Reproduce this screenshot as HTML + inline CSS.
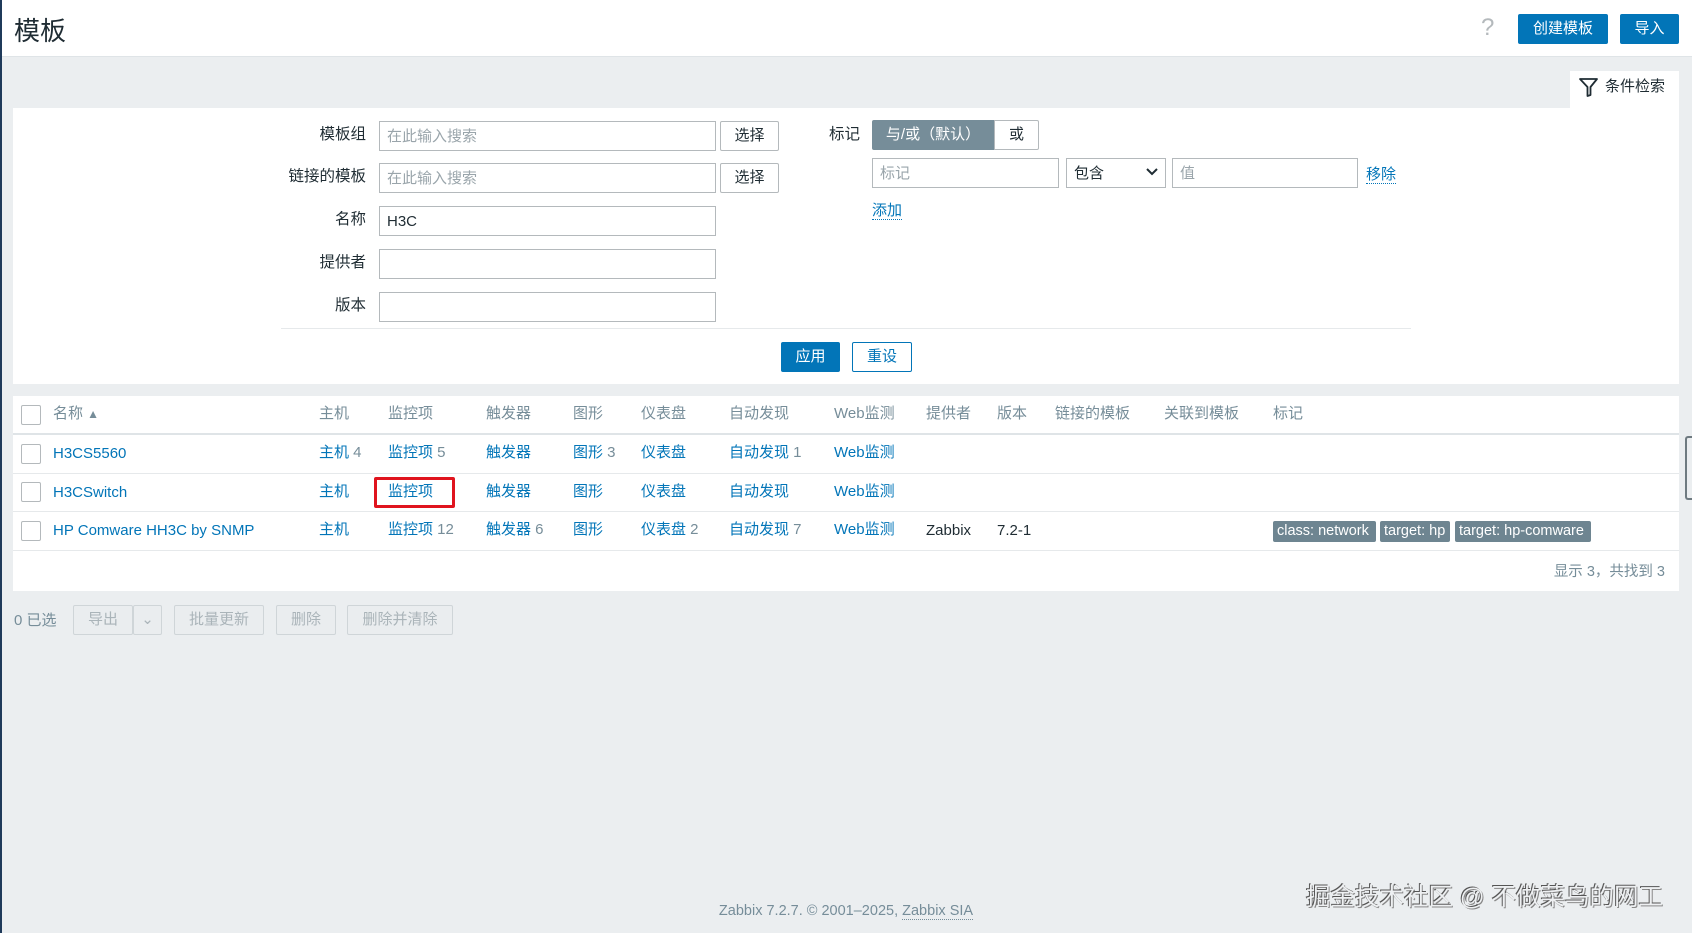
<!DOCTYPE html>
<html><head><meta charset="utf-8"><style>
*{box-sizing:border-box;margin:0;padding:0}
body{width:1692px;height:933px;background:#ebeef0;font-family:"Liberation Sans","Noto Sans CJK SC",sans-serif;font-size:15px;color:#1f2c33;position:relative;overflow:hidden}
.a{position:absolute}
.hdr{left:0;top:0;width:1692px;height:57px;background:#fff;border-bottom:1px solid #dfe4e7}
.lb{position:absolute;left:0;top:0;width:2px;height:933px;background:#1f3a5a}
.btn{position:absolute;background:#0275b8;color:#fff;border-radius:2px;text-align:center;font-size:15px}
.panel{background:#fff}
.lab{position:absolute;text-align:right;width:200px;font-size:15.5px;line-height:20px}
.inp{position:absolute;border:1px solid #b4b9bc;background:#fff;height:30px;line-height:30px;padding-left:7px;font-size:15px;color:#9aa5ab}
.sb{position:absolute;border:1px solid #b4b9bc;background:#fff;height:30px;line-height:28px;text-align:center;border-radius:2px}
.lk{color:#0275b8}
.g{color:#768d99}
.th{position:absolute;top:404px;color:#768d99;font-size:15px;line-height:20px}
.td{position:absolute;font-size:15px;white-space:nowrap;line-height:22px}
.cb{position:absolute;left:21px;width:20px;height:20px;border:1px solid #b4b9bc;border-radius:2px;background:#fff}
.row{position:absolute;left:13px;width:1666px;height:1px;background:#e6e9eb}
.tag{position:absolute;top:521px;height:21px;line-height:21px;background:#6e8591;color:#fff;padding:0 4px;border-radius:2px;font-size:14.5px}
.db{position:absolute;top:605px;height:30px;line-height:28px;border:1px solid #cfd5d8;background:#eaedef;color:#aab4b9;text-align:center;border-radius:2px}
.dot{border-bottom:1px dotted #0275b8}
</style></head><body>
<div class="a hdr"></div>
<div class="lb"></div>
<div class="a" style="left:14px;top:11px;font-size:26px;color:#1f2c33">模板</div>
<div class="a" style="left:1481px;top:14px;font-size:24px;color:#b4b9bc">?</div>
<div class="btn" style="left:1518px;top:14px;width:90px;height:30px;line-height:30px">创建模板</div>
<div class="btn" style="left:1620px;top:14px;width:59px;height:30px;line-height:30px">导入</div>

<div class="a panel" style="left:1570px;top:71px;width:109px;height:40px"></div>
<svg class="a" style="left:1578px;top:76px" width="22" height="22" viewBox="0 0 22 22"><path d="M2 3 H19 L12.5 11 V19 L9.5 20 V11 Z" fill="none" stroke="#1f2c33" stroke-width="1.8" stroke-linejoin="round"/></svg>
<div class="a" style="left:1605px;top:75px;font-size:15px">条件检索</div>

<div class="a panel" style="left:13px;top:108px;width:1666px;height:276px"></div>
<div class="lab" style="left:166px;top:125px">模板组</div>
<div class="lab" style="left:166px;top:167px">链接的模板</div>
<div class="lab" style="left:166px;top:210px">名称</div>
<div class="lab" style="left:166px;top:253px">提供者</div>
<div class="lab" style="left:166px;top:296px">版本</div>
<div class="inp" style="left:379px;top:121px;width:337px">在此输入搜索</div>
<div class="inp" style="left:379px;top:163px;width:337px">在此输入搜索</div>
<div class="inp" style="left:379px;top:206px;width:337px;color:#1f2c33">H3C</div>
<div class="inp" style="left:379px;top:249px;width:337px"></div>
<div class="inp" style="left:379px;top:292px;width:337px"></div>
<div class="sb" style="left:720px;top:121px;width:59px">选择</div>
<div class="sb" style="left:720px;top:163px;width:59px">选择</div>
<div class="a" style="left:829px;top:125px;font-size:15.5px;line-height:20px">标记</div>
<div class="a" style="left:872px;top:120px;width:122px;height:30px;line-height:30px;background:#768d99;color:#fff;text-align:center;border-radius:2px 0 0 2px">与/或（默认）</div>
<div class="sb" style="left:994px;top:120px;width:45px;border-radius:0 2px 2px 0">或</div>
<div class="inp" style="left:872px;top:158px;width:187px">标记</div>
<div class="inp" style="left:1066px;top:158px;width:100px;color:#1f2c33">包含</div>
<svg class="a" style="left:1146px;top:167px" width="12" height="10"><path d="M1 2 L6 7 L11 2" fill="none" stroke="#1f2c33" stroke-width="2"/></svg>
<div class="inp" style="left:1172px;top:158px;width:186px">值</div>
<div class="a lk" style="left:1366px;top:163px"><span class="dot">移除</span></div>
<div class="a lk" style="left:872px;top:199px"><span class="dot">添加</span></div>
<div class="a" style="left:281px;top:328px;width:1130px;height:1px;background:#e6e9eb"></div>
<div class="btn" style="left:781px;top:342px;width:59px;height:30px;line-height:30px">应用</div>
<div class="sb" style="left:852px;top:342px;width:60px;border-color:#0275b8;color:#0275b8">重设</div>

<div class="a panel" style="left:13px;top:396px;width:1666px;height:195px"></div>
<div class="a" style="left:13px;top:433px;width:1666px;height:2px;background:#dfe4e7"></div>
<div class="row" style="top:473px"></div>
<div class="row" style="top:511px"></div>
<div class="row" style="top:550px"></div>
<div class="cb" style="top:405px"></div>
<div class="cb" style="top:444px"></div>
<div class="cb" style="top:482px"></div>
<div class="cb" style="top:521px"></div>
<div class="th lk" style="left:53px">名称 <span style="color:#768d99;font-size:12px">▲</span></div>
<div class="th" style="left:319px">主机</div>
<div class="th" style="left:388px">监控项</div>
<div class="th" style="left:486px">触发器</div>
<div class="th" style="left:573px">图形</div>
<div class="th" style="left:641px">仪表盘</div>
<div class="th" style="left:729px">自动发现</div>
<div class="th" style="left:834px">Web监测</div>
<div class="th" style="left:926px">提供者</div>
<div class="th" style="left:997px">版本</div>
<div class="th" style="left:1055px">链接的模板</div>
<div class="th" style="left:1164px">关联到模板</div>
<div class="th" style="left:1273px">标记</div>

<div class="td lk" style="left:53px;top:443px">H3CS5560</div>
<div class="td lk" style="left:319px;top:442px">主机 <span class="g">4</span></div>
<div class="td lk" style="left:388px;top:442px">监控项 <span class="g">5</span></div>
<div class="td lk" style="left:486px;top:442px">触发器</div>
<div class="td lk" style="left:573px;top:442px">图形 <span class="g">3</span></div>
<div class="td lk" style="left:641px;top:442px">仪表盘</div>
<div class="td lk" style="left:729px;top:442px">自动发现 <span class="g">1</span></div>
<div class="td lk" style="left:834px;top:442px">Web监测</div>

<div class="td lk" style="left:53px;top:482px">H3CSwitch</div>
<div class="td lk" style="left:319px;top:481px">主机</div>
<div class="a" style="left:374px;top:477px;width:81px;height:31px;border:3px solid #e0141e;border-radius:2px"></div>
<div class="td lk" style="left:388px;top:481px">监控项</div>
<div class="td lk" style="left:486px;top:481px">触发器</div>
<div class="td lk" style="left:573px;top:481px">图形</div>
<div class="td lk" style="left:641px;top:481px">仪表盘</div>
<div class="td lk" style="left:729px;top:481px">自动发现</div>
<div class="td lk" style="left:834px;top:481px">Web监测</div>

<div class="td lk" style="left:53px;top:520px">HP Comware HH3C by SNMP</div>
<div class="td lk" style="left:319px;top:519px">主机</div>
<div class="td lk" style="left:388px;top:519px">监控项 <span class="g">12</span></div>
<div class="td lk" style="left:486px;top:519px">触发器 <span class="g">6</span></div>
<div class="td lk" style="left:573px;top:519px">图形</div>
<div class="td lk" style="left:641px;top:519px">仪表盘 <span class="g">2</span></div>
<div class="td lk" style="left:729px;top:519px">自动发现 <span class="g">7</span></div>
<div class="td lk" style="left:834px;top:519px">Web监测</div>
<div class="td" style="left:926px;top:520px">Zabbix</div>
<div class="td" style="left:997px;top:520px">7.2-1</div>
<div class="tag" style="left:1273px;width:103px">class: network</div>
<div class="tag" style="left:1380px;width:70px">target: hp</div>
<div class="tag" style="left:1455px;width:136px">target: hp-comware</div>
<div class="td g" style="right:27px;top:561px;font-size:14.5px">显示 3，共找到 3</div>
<div class="a" style="left:1685px;top:436px;width:7px;height:64px;border:2px solid #6e7a80;border-right:none;border-radius:3px 0 0 3px"></div>

<div class="a g" style="left:14px;top:609px">0 已选</div>
<div class="db" style="left:73px;width:60px">导出</div>
<div class="db" style="left:133px;width:29px">⌄</div>
<div class="db" style="left:174px;width:90px">批量更新</div>
<div class="db" style="left:276px;width:60px">删除</div>
<div class="db" style="left:347px;width:106px">删除并清除</div>

<div class="a g" style="left:0;width:1692px;text-align:center;top:903px;font-size:14.5px">Zabbix 7.2.7. © 2001–2025, <span class="dot" style="color:#768d99;border-color:#768d99">Zabbix SIA</span></div>
<div class="a" style="left:1306px;top:878px;font-size:24.5px;color:#eef0f2;text-shadow:-1px -1px 0 #555,1px 1px 0 #888">掘金技术社区 @ 不做菜鸟的网工</div>
</body></html>
